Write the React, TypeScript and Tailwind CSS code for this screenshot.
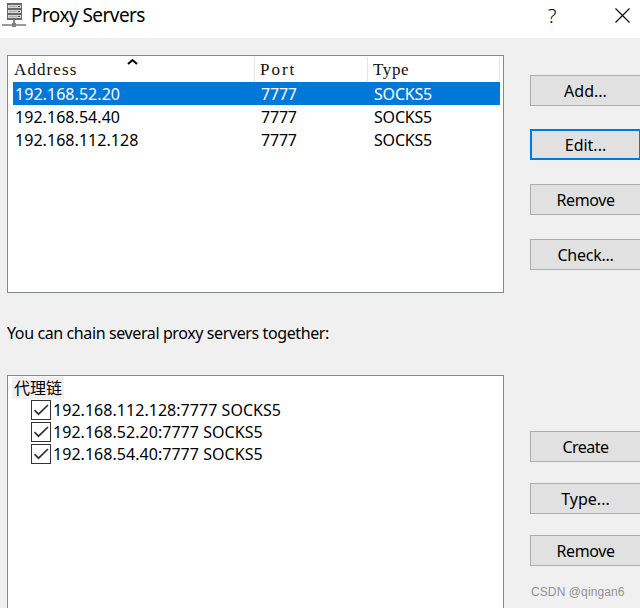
import React from "react";

const servers = [
  { address: "192.168.52.20", port: "7777", type: "SOCKS5", selected: true },
  { address: "192.168.54.40", port: "7777", type: "SOCKS5", selected: false },
  { address: "192.168.112.128", port: "7777", type: "SOCKS5", selected: false },
];

const chain = [
  "192.168.112.128:7777 SOCKS5",
  "192.168.52.20:7777 SOCKS5",
  "192.168.54.40:7777 SOCKS5",
];

function ServerIcon() {
  return (
    <svg width="24" height="25" viewBox="0 0 24 25" shapeRendering="crispEdges" className="shrink-0">
      <path d="M5 0h15v17H5z" fill="#686868" />
      <path d="M6 2h13v3H6zM6 7h13v3H6zM6 12h13v3H6z" fill="#d8d8d8" />
      <path d="M7 3h8v1H7zM7 8h8v1H7zM7 13h8v1H7z" fill="#aaaaaa" />
      <path d="M16 3h2v1h-2zM16 8h2v1h-2zM16 13h2v1h-2z" fill="#444444" />
      <path d="M11 17h2v4h-2z" fill="#888888" />
      <path d="M0 21h24v2H0z" fill="#9b9b9b" />
      <path d="M10 20h4v4h-4z" fill="#808080" />
    </svg>
  );
}

function Button({ label, focused = false, tracking = "" }: { label: string; focused?: boolean; tracking?: string }) {
  return (
    <button
      className={`flex h-[31px] w-[111px] shrink-0 items-center justify-center bg-[#e1e1e1] pt-px text-[16px] leading-[22px] ${tracking} ${
        focused ? "border-2 border-[#0078d7]" : "border border-[#adadad]"
      }`}
    >
      {label}
    </button>
  );
}

export default function App() {
  return (
    <div className="flex h-[608px] w-[640px] flex-col overflow-hidden bg-[#f0f0f0] font-['Noto_Sans','Noto_Sans_CJK_SC',sans-serif] text-[16px] text-black">
      <header className="flex h-[38px] shrink-0 bg-white pl-[2px]">
        <div className="pt-[3px]">
          <ServerIcon />
        </div>
        <h1 className="pl-[5px] pt-[3px] text-[19px] leading-[25px] tracking-[-0.55px]">Proxy Servers</h1>
        <span className="ml-auto w-[66px] pt-[2px] text-[20px] font-light leading-[28px]">?</span>
        <svg width="26" height="30" viewBox="0 0 26 30" fill="none" stroke="black" strokeWidth="1.1">
          <path d="M1.5 8.5l14 14M15.5 8.5l-14 14" />
        </svg>
      </header>

      <main className="flex h-[570px] pl-[7px]">
        <section className="flex w-[497px] shrink-0 flex-col pt-[17px]">
          <div className="h-[238px] shrink-0 border border-[#828790] bg-white pl-[5px] pr-[3px] pt-px">
            <div className="relative flex h-[25px] font-['Liberation_Serif',serif] text-[17px] leading-[25px] text-[#111]">
              <span className="w-[242px] border-r border-[#e5e5e5] pl-px tracking-[1.1px]">Address</span>
              <span className="w-[113px] border-r border-[#e5e5e5] pl-[5px] tracking-[2px]">Port</span>
              <span className="grow border-r border-[#e5e5e5] pl-[5px] tracking-[0.6px]">Type</span>
              <svg className="absolute left-[114px] top-[1px]" width="11" height="7" fill="none" stroke="black" strokeWidth="2">
                <path d="M1 6l4.5-4L10 6" />
              </svg>
            </div>
            {servers.map((s) => (
              <div key={s.address} className={`flex h-[23px] pl-[2px] leading-[24px] ${s.selected ? "bg-[#0078d7] text-white" : ""}`}>
                <span className="w-[246px] tracking-[0.05px]">{s.address}</span>
                <span className="w-[113px] tracking-[-0.2px]">{s.port}</span>
                <span className="tracking-[-0.2px]">{s.type}</span>
              </div>
            ))}
          </div>
          <p className="mt-[28px] h-[24px] shrink-0 leading-[24px]">
            <span className="tracking-[-0.39px]">You can chain several proxy servers together:</span>
          </p>
          <div className="mt-[30px] grow border border-b-0 border-[#828790] bg-white pl-[4px] pt-px">
            <div className="h-[22px] w-[52px] bg-[#f0f0f0] pl-[2px] font-['Noto_Sans_CJK_SC',sans-serif] leading-[20px]">
              代理链
            </div>
            {chain.map((c) => (
              <div key={c} className="flex h-[22px] items-center gap-[2px] pl-[19px]">
                <svg width="20" height="20" viewBox="0 0 20 20" fill="none" stroke="#333333" className="shrink-0">
                  <rect x="0.5" y="0.5" width="19" height="19" />
                  <path d="M3.5 10.2l4 4L17 5" strokeWidth="1.7" />
                </svg>
                <span className="tracking-[0.04px]">{c}</span>
              </div>
            ))}
          </div>
        </section>

        <aside className="flex w-[136px] shrink-0 flex-col overflow-hidden pl-[26px] pt-[37px]">
          <div className="flex flex-col gap-6">
            <Button label="Add..." />
            <div className="-mt-px flex">
              <Button label="Edit..." focused />
            </div>
            <Button label="Remove" tracking="tracking-[-0.4px]" />
            <Button label="Check..." tracking="tracking-[-0.25px]" />
          </div>
          <div className="mt-[161px] flex flex-col gap-[21px]">
            <Button label="Create" tracking="tracking-[-0.5px]" />
            <Button label="Type..." />
            <Button label="Remove" tracking="tracking-[-0.4px]" />
          </div>
          <span className="mt-[17px] whitespace-nowrap pl-px font-['Liberation_Sans',sans-serif] text-[12px] leading-[18px] tracking-[0.1px] text-[#929292]">CSDN @qingan6</span>
        </aside>
      </main>
    </div>
  );
}
